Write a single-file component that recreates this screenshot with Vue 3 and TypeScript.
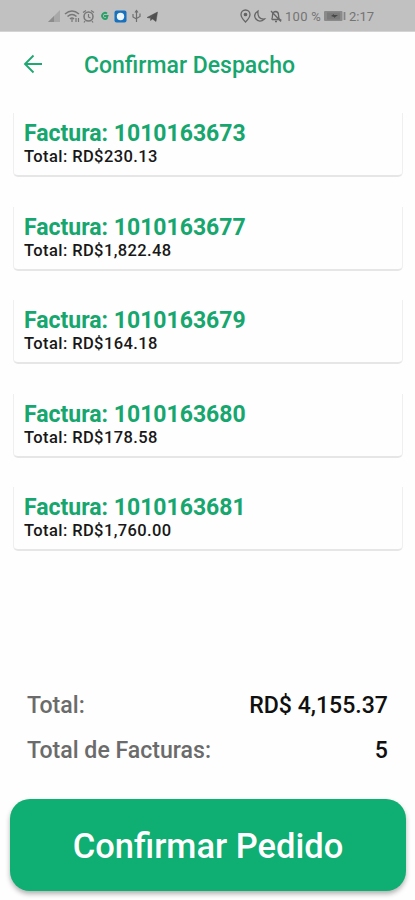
<script setup lang="ts">
interface Invoice {
  id: string
  total: string
}

const invoices: Invoice[] = [
  { id: '1010163673', total: '230.13' },
  { id: '1010163677', total: '1,822.48' },
  { id: '1010163679', total: '164.18' },
  { id: '1010163680', total: '178.58' },
  { id: '1010163681', total: '1,760.00' },
]
</script>

<template>
  <main class="screen">
    <div class="status">
      <svg class="icons" width="112" height="16" viewBox="0 0 112 16" fill="none">
        <path d="M0 14 12 2v12z" fill="#a8a8a8" />
        <path d="M0 14 6 8v6z" fill="#8d8d8d" />
        <g stroke="#777" stroke-width="1.5">
          <path d="M17 6q7-6 14 0M19.500 8.500q4.500-4 9 0M22 11q2-2 4 0" />
          <path d="M24 11v3M28 10v4M30.500 10v4" stroke-width="1.200" />
          <circle cx="40.500" cy="8.500" r="4.500" />
          <path d="M35 4.500 38 2.500M43 2.500l3 2M40.500 6v3l2 1M37 13l-1 1.500M44 13l1 1.500" stroke-width="1.200" />
        </g>
        <path d="M59 5.500a3 3 0 1 0 .2 4.500M56 8h3.500l-1 3" stroke="#27a168" stroke-width="1.800" />
        <rect x="66.500" y="2.500" width="12" height="12" rx="2" fill="#1871bd" />
        <circle cx="72.500" cy="8.500" r="3.700" fill="#eef6fb" />
        <path d="M88.500 14V3M85 6v3l3.500 2M92 5.500v3l-3.500 2M87 4.500l1.500-2 1.500 2" stroke="#707070" stroke-width="1.200" />
        <path d="M99 9.500 109.500 4l-1.500 9.500-3.500-2.500-2 1.500v-3l3.500-3-4.500 3.500z" fill="#505050" stroke="#505050" stroke-width=".5" />
      </svg>
      <div class="right">
        <svg width="42" height="16" viewBox="0 0 42 16" fill="none" stroke="#666" stroke-width="1.300">
          <path d="M5.500 14Q1 9.500 1 6.500a4.500 4.500 0 0 1 9 0q0 3-4.500 7.500z" />
          <circle cx="5.500" cy="6.500" r="1.200" fill="#606060" />
          <path d="M18 3q-5 3-2.500 7.500 4 5 9 .5-7.500.5-6.500-8z" />
          <path d="M31 3l10 10.500M32 11.500h8q-1.500-1-1.500-4.500 0-3-2.500-3.500-3.500 0-3.500 4 0 3-1 4M35 13.500h2" />
        </svg>
        <span class="charge">100 %</span>
        <svg class="battery" width="24" height="12" viewBox="0 0 24 12">
          <rect x="1" y="1" width="18.500" height="10" rx="1" fill="#8a8a8a" />
          <rect x="4" y="2.500" width="13" height="7" fill="#7b7b7b" />
          <path d="M21.500 2v8" stroke="#858585" stroke-width="1.800" />
          <path d="M8 6l3-2V5h4l-4 3V7z" fill="#484848" />
        </svg>
        <span class="time">2:17</span>
      </div>
    </div>

    <header class="bar">
      <svg width="20" height="20" viewBox="0 0 20 20" fill="none" stroke="#20a873" stroke-width="1.900">
        <path d="M19 10H2M10.500 1.500 2 10l8.500 8.500" />
      </svg>
      <h1>Confirmar Despacho</h1>
    </header>

    <section class="list">
      <article v-for="invoice in invoices" :key="invoice.id" class="card">
        <h2>Factura: {{ invoice.id }}</h2>
        <p>Total: RD${{ invoice.total }}</p>
      </article>
    </section>

    <section class="summary">
      <div class="row"><span>Total:</span><strong>RD$ 4,155.37</strong></div>
      <div class="row"><span>Total de Facturas:</span><strong>{{ invoices.length }}</strong></div>
    </section>

    <button class="confirm" type="button">Confirmar Pedido</button>
  </main>
</template>

<style>
body { background: #fefefe; }
</style>

<style scoped>
.screen {
  box-sizing: border-box;
  height: 900px;
  display: flex;
  flex-direction: column;
  overflow: hidden;
  background: #fefefe;
  font-family: Roboto, sans-serif;
}
.status {
  flex: none;
  box-sizing: border-box;
  height: 32px;
  padding: 1px 39px 0 48px;
  display: flex;
  align-items: center;
  justify-content: space-between;
  background: #c1c1c1;
  border-bottom: 1px solid #d4d4d4;
}
.right {
  display: flex;
  align-items: center;
  color: #747474;
  font-size: 13px;
  white-space: nowrap;
}
.charge { margin-left: 3px; width: 38px; letter-spacing: 0.3px; }
.time { width: 27px; margin-left: 2px; }
.bar {
  flex: none;
  height: 65px;
  padding-left: 23px;
  display: flex;
  align-items: center;
  gap: 41px;
}
.bar svg { margin-top: -2px; }
h1, h2, p { margin: 0; }
h1 {
  color: #16a66e;
  font-size: 23px;
  line-height: 28px;
  font-weight: 500;
  padding-top: 2px;
}
.list {
  flex: none;
  padding: 16px 12px 0 13px;
  display: flex;
  flex-direction: column;
  gap: 29.5px;
}
.card {
  box-sizing: border-box;
  height: 64px;
  padding: 7px 10px;
  border: solid #efefef;
  border-width: 0 1px 2px;
  border-bottom-color: #e6e6e6;
  border-radius: 0 0 5px 5px;
}
.card h2 {
  color: #16a66e;
  font-size: 23px;
  line-height: 27px;
  font-weight: 700;
}
.card p {
  color: #181818;
  font-size: 16.5px;
  line-height: 19px;
  font-weight: 500;
  letter-spacing: 0.4px;
}
.summary {
  margin-top: auto;
  padding: 0 27px 26px;
  display: flex;
  flex-direction: column;
  gap: 17px;
}
.row {
  display: flex;
  justify-content: space-between;
  font-size: 23.1px;
  line-height: 28px;
}
.row span { color: #6b6b6b; font-weight: 500; }
.row strong { color: #101010; font-weight: 500; }
.confirm {
  flex: none;
  margin: 8px 9px 9px 10px;
  height: 92px;
  padding: 2px 0 0;
  border: 0;
  border-radius: 20px;
  background: #0fae72;
  color: #fff;
  font: 500 34.5px/40px Roboto, sans-serif;
  box-shadow: 0 3px 5px rgba(0, 0, 0, 0.3);
}
</style>
